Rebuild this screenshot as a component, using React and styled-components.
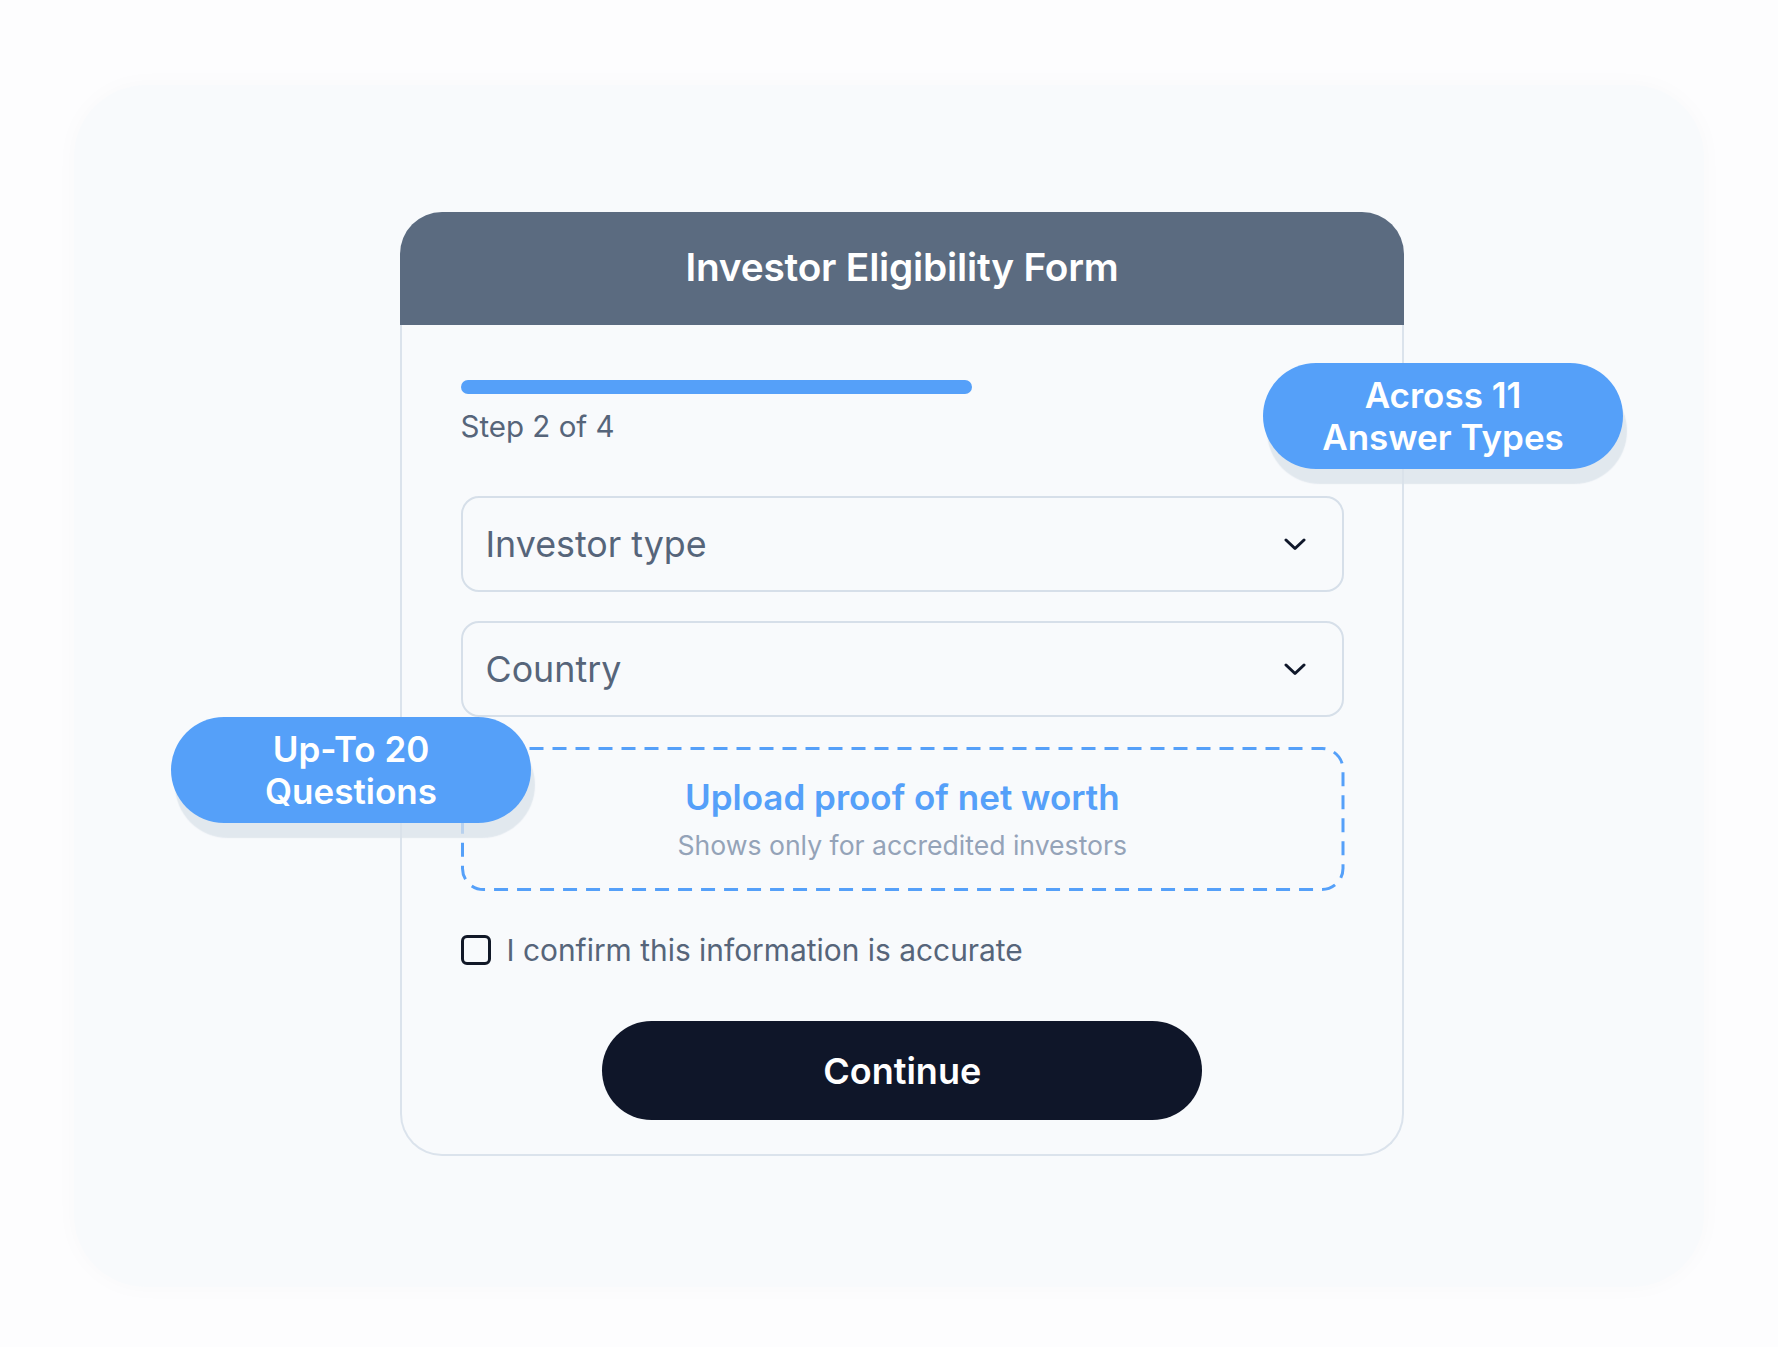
import React from "react";
import styled, { createGlobalStyle } from "styled-components";

const GlobalStyle = createGlobalStyle`
  html, body {
    margin: 0;
    padding: 0;
    background: #fdfdfe;
    font-family: Inter, "Noto Sans", "Liberation Sans", sans-serif;
    -webkit-font-smoothing: antialiased;
  }
  * { box-sizing: border-box; }
`;

const Page = styled.div`
  width: 1778px;
  min-height: 1347px;
  padding-top: 85px;
  display: flex;
  justify-content: center;
  align-items: flex-start;
`;

const Panel = styled.div`
  width: 1630px;
  height: 1202px;
  background: #f8fafc;
  border-radius: 72px;
  box-shadow: 0 0 24px rgba(15, 23, 42, 0.025);
  padding: 127px 300px 0 326px;
`;

const CardWrap = styled.div`
  position: relative;
  width: 1004px;
`;

const Card = styled.div`
  width: 100%;
  height: 944px;
  display: flex;
  flex-direction: column;
`;

const Header = styled.div`
  height: 113px;
  padding-bottom: 4px;
  background: #5b6b80;
  border-radius: 42px 42px 0 0;
  display: flex;
  align-items: center;
  justify-content: center;
  flex-shrink: 0;
`;

const Title = styled.h1`
  margin: 0;
  color: #ffffff;
  font-size: 38.8px;
  font-weight: 600;
  letter-spacing: -0.2px;
`;

const Body = styled.div`
  flex: 1;
  border: 2.5px solid #dbe3ec;
  border-top: none;
  border-radius: 0 0 42px 42px;
  background: #f8fafc;
  padding: 55px 58px 0 58.5px;
  display: flex;
  flex-direction: column;
`;

const ProgressBar = styled.div`
  width: 511px;
  height: 14px;
  border-radius: 7px;
  background: #55a0f9;
`;

const StepText = styled.div`
  margin-top: 14px;
  font-size: 29.5px;
  line-height: 36px;
  color: #56657a;
`;

const Select = styled.div`
  margin-top: ${(p) => p.$gap}px;
  height: 96px;
  border: 2.5px solid #d6dfe9;
  border-radius: 18px;
  display: flex;
  align-items: center;
  justify-content: space-between;
  padding: 0 36px 0 23px;
`;

const SelectLabel = styled.span`
  font-size: 35.8px;
  color: #56657a;
`;

const Chevron = () => (
  <svg width="22" height="13" viewBox="0 0 22 13" fill="none">
    <path d="M2 2L11 10.5L20 2" stroke="#0f172a" strokeWidth="3" strokeLinecap="round" strokeLinejoin="round" />
  </svg>
);

const UploadBox = styled.div`
  position: relative;
  margin-top: 30px;
  height: 144px;
  padding-bottom: 2px;
  display: flex;
  flex-direction: column;
  align-items: center;
  justify-content: center;
  gap: 12px;
`;

const DashFrame = styled.svg`
  position: absolute;
  inset: 0;
  width: 100%;
  height: 100%;
  overflow: visible;
  pointer-events: none;
`;

const DashRect = styled.rect`
  x: 1.5px;
  y: 1.5px;
  width: calc(100% - 3px);
  height: calc(100% - 3px);
  rx: 21px;
  fill: none;
  stroke: #55a0f9;
  stroke-width: 3px;
  stroke-dasharray: 14 9;
`;

const UploadTitle = styled.div`
  font-size: 35px;
  font-weight: 600;
  color: #55a0f9;
  line-height: 42px;
`;

const UploadHint = styled.div`
  font-size: 26.6px;
  color: #94a3b8;
  line-height: 30px;
`;

const CheckRow = styled.label`
  margin-top: 41px;
  display: flex;
  align-items: center;
  gap: 16px;
  height: 36px;
`;

const CheckBox = styled.span`
  width: 30px;
  height: 30px;
  border: 3px solid #111827;
  border-radius: 6px;
  flex-shrink: 0;
`;

const CheckText = styled.span`
  font-size: 29.9px;
  color: #56657a;
`;

const ContinueButton = styled.button`
  margin: 53px auto 0;
  width: 600px;
  height: 99px;
  border: none;
  border-radius: 50px;
  background: #0f1629;
  color: #ffffff;
  font-family: inherit;
  font-size: 36px;
  font-weight: 600;
  cursor: pointer;
`;

const Badge = styled.div`
  position: absolute;
  left: ${(p) => p.$x}px;
  top: ${(p) => p.$y}px;
  width: 360px;
  height: 106px;
  border-radius: 53px;
  background: #55a0f9;
  color: #ffffff;
  font-size: 35px;
  font-weight: 600;
  line-height: 42px;
  text-align: center;
  display: flex;
  align-items: center;
  justify-content: center;
  box-shadow: 4px 15px 1px rgba(218, 225, 234, 0.75);
`;

export default function App() {
  return (
    <>
      <GlobalStyle />
      <Page>
        <Panel>
          <CardWrap>
            <Card>
              <Header>
                <Title>Investor Eligibility Form</Title>
              </Header>
              <Body>
                <ProgressBar />
                <StepText>Step 2 of 4</StepText>
                <Select $gap={52}>
                  <SelectLabel>Investor type</SelectLabel>
                  <Chevron />
                </Select>
                <Select $gap={29}>
                  <SelectLabel>Country</SelectLabel>
                  <Chevron />
                </Select>
                <UploadBox>
                  <DashFrame>
                    <DashRect />
                  </DashFrame>
                  <UploadTitle>Upload proof of net worth</UploadTitle>
                  <UploadHint>Shows only for accredited investors</UploadHint>
                </UploadBox>
                <CheckRow>
                  <CheckBox />
                  <CheckText>I confirm this information is accurate</CheckText>
                </CheckRow>
                <ContinueButton>Continue</ContinueButton>
              </Body>
            </Card>
            <Badge $x={863} $y={151}>
              Across 11
              <br />
              Answer Types
            </Badge>
            <Badge $x={-229} $y={505}>
              Up-To 20
              <br />
              Questions
            </Badge>
          </CardWrap>
        </Panel>
      </Page>
    </>
  );
}
